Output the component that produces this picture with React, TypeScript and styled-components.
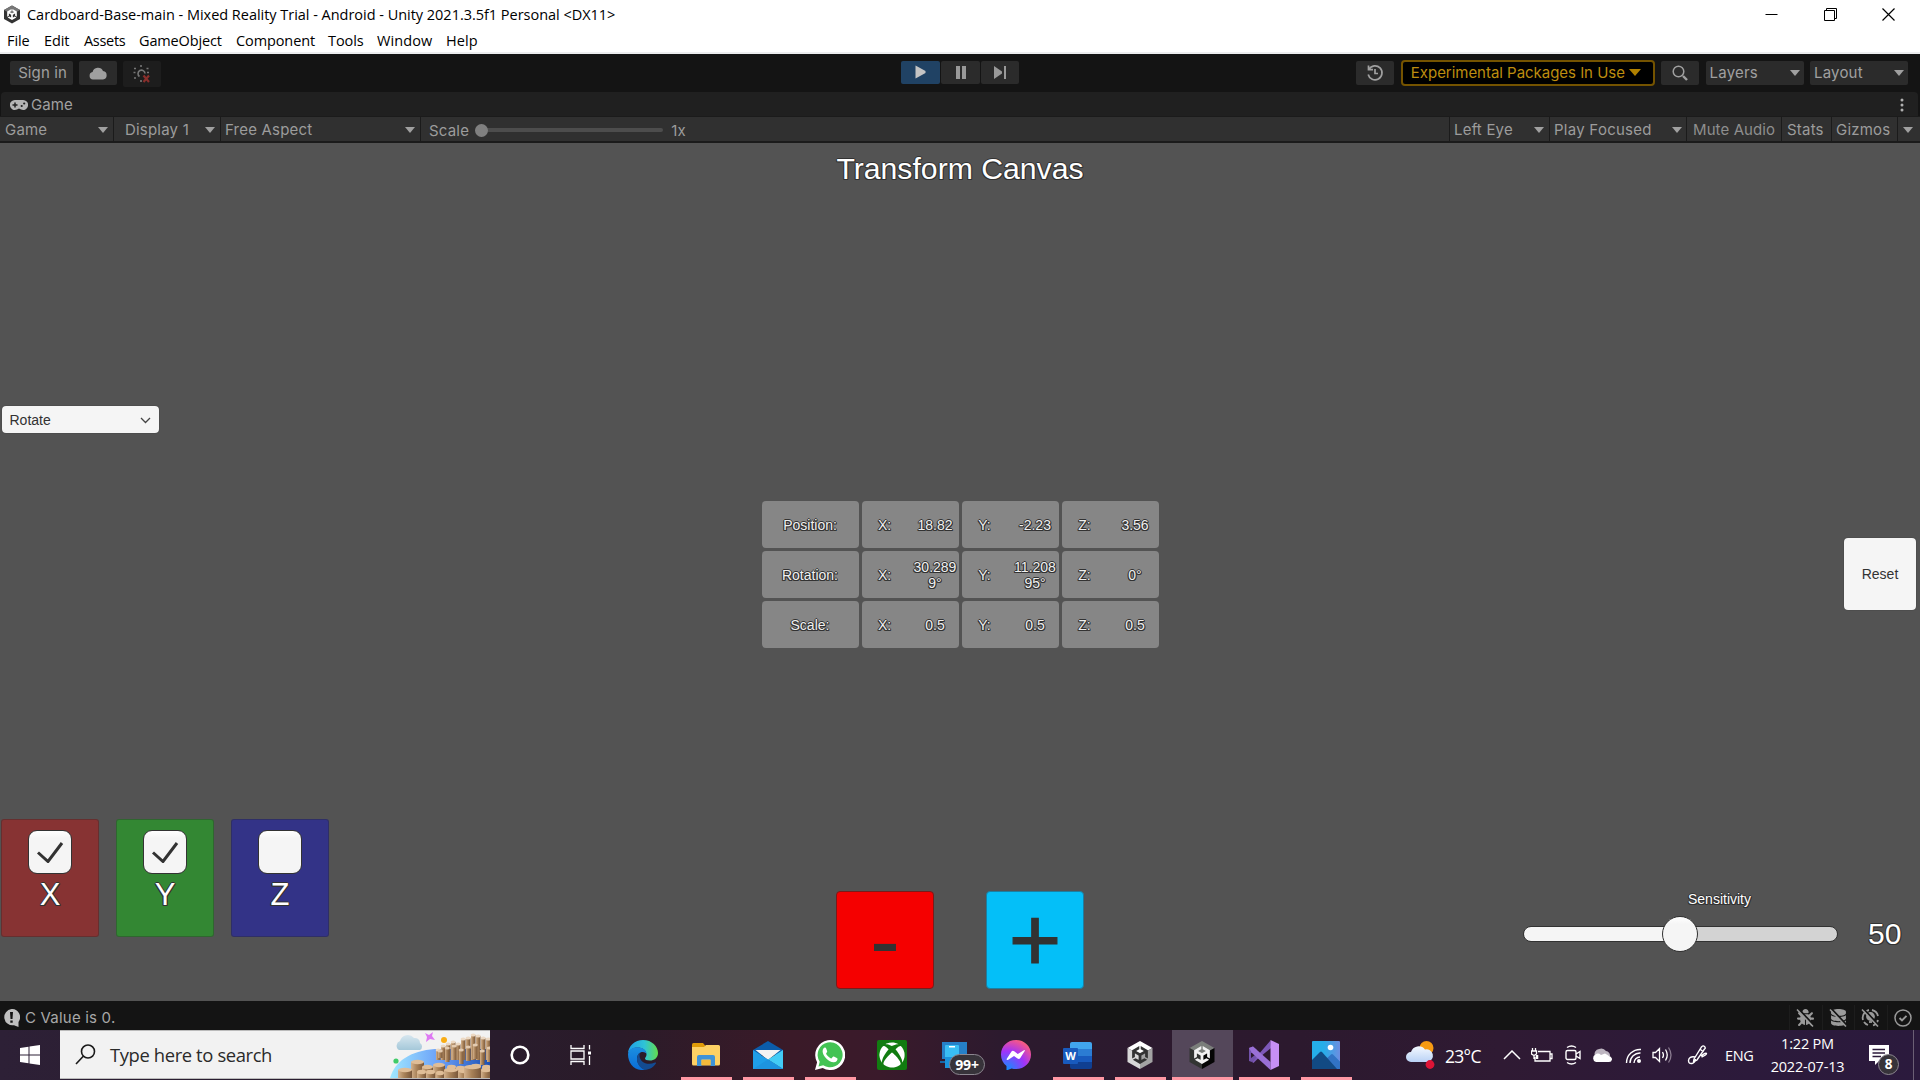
import React from 'react';
import styled, { createGlobalStyle, css } from 'styled-components';
import { FaUnity, FaXbox, FaBug, FaDatabase } from 'react-icons/fa6';

const Global = createGlobalStyle`
  * { box-sizing: border-box; }
  html, body { margin: 0; padding: 0; background: #141414; overflow: hidden; }
  svg { display: block; flex: none; }
`;

const editorFont = css`font-family: Inter, "Liberation Sans", sans-serif; font-size: 15px;`;
const systemFont = css`font-family: "Open Sans", "Noto Sans", sans-serif;`;
const outline = css`
  text-shadow: -1px 0 #323232, 1px 0 #323232, 0 1px #323232, 0 -1px #323232, 1px 1px #323232, -1px 1px #323232;
`;

const Desktop = styled.div`
  width: 1920px; height: 1080px; display: flex; flex-direction: column; overflow: hidden;
`;

/* ---------- window chrome ---------- */
const TitleBar = styled.header`
  height: 28px; background: #fff; display: flex; align-items: center; padding: 0 25px 0 3px; color: #000;
  ${systemFont} font-size: 14.5px;
`;
const WindowTitle = styled.span`margin-left: 6px; letter-spacing: -0.025px; white-space: nowrap; flex: 1;`;
const WindowControls = styled.div`display: flex; gap: 45.5px;`;
const MenuBar = styled.nav`
  height: 26px; background: #fff; border-bottom: 2px solid #ecedef; color: #000;
  display: flex; align-items: center; padding: 1px 0 0 7px; ${systemFont} font-size: 14.5px;
`;
const MenuItem = styled.span<{ $w: number; $ls?: number }>`
  width: ${p => p.$w}px; flex: none; white-space: nowrap; letter-spacing: ${p => p.$ls ?? -0.1}px;
`;

/* ---------- editor toolbars ---------- */
const Toolbar = styled.div`
  height: 38px; background: #141414; color: #a0a0a0; ${editorFont}
  display: grid; grid-template-columns: 1fr auto 1fr; padding: 7px 12px 0 10px;
`;
const ToolGroup = styled.div<{ $end?: boolean; $gap: number }>`
  display: flex; align-items: flex-start; gap: ${p => p.$gap}px; justify-content: ${p => (p.$end ? 'flex-end' : 'flex-start')};
`;
const PlayGroup = styled(ToolGroup)`margin-left: 2px;`;
const ToolButton = styled.div<{ $w: number; $bg?: string; $h?: number }>`
  width: ${p => p.$w}px; height: ${p => p.$h ?? 24}px; background: ${p => p.$bg ?? '#2b2b2b'};
  border-radius: 2px; display: flex; align-items: center; justify-content: center; white-space: nowrap; padding-bottom: 1px;
`;
const SignIn = styled(ToolButton)`padding-left: 2px; letter-spacing: 0.1px;`;
const ToolSelect = styled(ToolButton)`justify-content: space-between; padding: 0 4px 1px; letter-spacing: 0.2px;`;
const PackagesButton = styled.div`
  width: 254px; height: 26px; margin: -1px 0 0; border: 2px solid #745300; border-radius: 4px; background: #000;
  color: #bd8d0f; display: flex; align-items: center; gap: 4px; padding: 0 0 1px 8px; white-space: nowrap; letter-spacing: -0.03px;
`;
const Arrow = styled.i<{ $c?: string; $s?: number }>`
  width: 0; height: 0; flex: none;
  border-left: ${p => p.$s ?? 5}px solid transparent; border-right: ${p => p.$s ?? 5}px solid transparent;
  border-top: ${p => (p.$s ?? 5) + 1}px solid ${p => p.$c ?? '#a0a0a0'};
`;
const TabBar = styled.div`
  height: 24px; margin: 0 2px 0 1px; border-radius: 4px 4px 0 0; background: #202020; color: #a0a0a0; ${editorFont}
  display: flex; align-items: center; padding: 1px 11px 0 9px; gap: 3px; letter-spacing: 0.1px;
`;
const Grow = styled.div`flex: 1;`;
const GameBar = styled.div`
  height: 27px; background: #303030; border-top: 1px solid #1b1b1b; border-bottom: 2px solid #1b1b1b; color: #9c9c9c;
  display: flex; padding-left: 1px; ${editorFont}
`;
const BarCell = styled.div<{ $w: number; $pl: number; $pr?: number; $line?: boolean; $ls?: number; $dim?: boolean }>`
  width: ${p => p.$w}px; padding: 1px ${p => p.$pr ?? 0}px 0 ${p => p.$pl}px; display: flex; align-items: center;
  justify-content: space-between; white-space: nowrap; letter-spacing: ${p => p.$ls ?? 0.2}px;
  border-right: ${p => (p.$line === false ? 0 : 1)}px solid #1b1b1b; color: ${p => (p.$dim ? '#8e8e8e' : 'inherit')};
`;
const ScaleCell = styled(BarCell)`justify-content: flex-start; padding-top: 2px;`;
const ScaleLine = styled.div`
  width: 188px; height: 4px; border-radius: 2px; background: #4d4d4d; display: flex; align-items: center; margin: 0 8px 0 6px;
`;
const ScaleKnob = styled.div`width: 13px; height: 13px; border-radius: 50%; background: #808080;`;

/* ---------- game view ---------- */
const GameView = styled.main`
  height: 858px; background: #535353; font-family: "Liberation Sans", Arial, sans-serif; font-size: 14px; color: #fff;
`;
const CanvasTitle = styled.h1`
  margin: 0; padding-top: 8px; height: 263px; font-size: 30.2px; font-weight: 400; line-height: 36px; text-align: center; ${outline}
`;
const ModeSelect = styled.div`
  width: 157px; height: 27px; margin-left: 1.5px; border-radius: 4px; background: #f5f5f5; color: #323232;
  display: flex; align-items: center; justify-content: space-between; padding: 1px 8px 0 8px; box-shadow: 0 0 1px #222;
`;
const MiddleRow = styled.section`
  margin-top: 68px; height: 147px; display: grid; grid-template-columns: 1fr auto 1fr; align-items: center; padding-right: 4px;
`;
const ValueTable = styled.div`
  grid-column: 2; display: grid; grid-template-columns: repeat(4, 97px); grid-auto-rows: 47px; gap: 3px; margin-left: 4px;
`;
const Cell = styled.div`
  border-radius: 4px; background: #868686; display: flex; align-items: center; justify-content: center;
  line-height: 16px; color: #f0f0f0; ${outline}
`;
const AxisName = styled.span`width: 46px; text-align: center;`;
const AxisValue = styled.span`width: 48px; text-align: center; margin-left: 3px; padding-left: 1px; white-space: pre;`;
const ResetButton = styled.div`
  justify-self: end; width: 72px; height: 72px; margin-bottom: 1px; border-radius: 4px; background: #f5f5f5; color: #323232;
  display: flex; align-items: center; justify-content: center; box-shadow: 0 0 1px #222;
`;
const BottomRow = styled.section`
  margin-top: 171px; display: grid; grid-template-columns: 1fr auto 1fr; padding: 0 19px 0 1px;
`;
const AxisToggles = styled.div`display: flex; gap: 17px;`;
const AxisPanel = styled.div<{ $c: string }>`
  width: 98px; height: 118px; border-radius: 3px; background: ${p => p.$c}; border: 1px solid rgba(40, 40, 40, 0.35);
  display: flex; flex-direction: column; align-items: center; padding-top: 10px; font-size: 31px; line-height: 36px; gap: 3px; ${outline}
`;
const CheckBox = styled.div`
  width: 44px; height: 44px; border-radius: 9px; border: 1px solid #333; background: linear-gradient(#fff, #f5f5f5 7px);
  display: flex; align-items: center; justify-content: center;
`;
const StepButtons = styled.div`display: flex; gap: 52px; padding-top: 72px; margin-left: 18px;`;
const StepButton = styled.div<{ $c: string; $edge: string; $stroke?: number; $lh: number }>`
  width: 98px; height: 98px; border-radius: 4px; background: ${p => p.$c}; border: 1px solid ${p => p.$edge}; color: #323232;
  text-align: center; font-size: 90px; line-height: ${p => p.$lh}px; -webkit-text-stroke: ${p => p.$stroke ?? 0}px #323232;
`;
const Sensitivity = styled.div`
  justify-self: end; padding-top: 72px; display: grid; grid-template-columns: 315px 33px; column-gap: 30.5px; row-gap: 8px;
  align-items: center; align-content: start;
`;
const SensLabel = styled.span`text-align: center; line-height: 16px; padding-left: 79px; grid-column: 1; ${outline}`;
const SensTrack = styled.div`
  grid-column: 1; height: 16px; border-radius: 8px; border: 1px solid #323232;
  background: linear-gradient(90deg, #f5f5f5 50%, #d3d3d3 50%); display: flex; align-items: center; justify-content: center;
`;
const SensKnob = styled.div`
  width: 36px; height: 36px; flex: none; border-radius: 50%; border: 1px solid #323232; background: linear-gradient(#fff, #f5f5f5 7px);
`;
const SensValue = styled.span`grid-column: 2; font-size: 30px; line-height: 38px; ${outline}`;

/* ---------- status bar ---------- */
const StatusBar = styled.footer`
  height: 29px; background: #141414; color: #a8a8a8; display: flex; align-items: center; padding: 4px 1px 0 3px; gap: 5px; ${editorFont}
  letter-spacing: 0.2px;
`;
const StatusIcon = styled.div`
  width: 32.5px; height: 25px; border-left: 1px solid #1d1d1d; display: flex; align-items: center; justify-content: center;
  margin-left: -5px; color: #9a9a9a;
`;

/* ---------- taskbar ---------- */
const TaskBar = styled.div`
  height: 50px; display: flex; color: #fff; ${systemFont}
  background: linear-gradient(90deg, #2d2036 0, #291c2c 500px, #2a1b29 620px, #3a1a28 790px, #3a1a2b 880px, #2c1a2e 1000px, #2c192e 1300px, #2f1a33 1500px, #2c1a3b 1750px, #2b1a3d 1920px);
`;
const StartButton = styled.div`width: 60px; display: flex; align-items: center; justify-content: center;`;
const SearchBox = styled.div`
  width: 430px; height: 49px; background: #f2f2f2; border-top: 1px solid #bbb; border-bottom: 1px solid #bbb; color: #2a2a2a;
  display: flex; align-items: center; padding-left: 15px; font-size: 18.4px; white-space: nowrap;
`;
const SearchText = styled.span`margin-left: 14px; flex: 1; letter-spacing: -0.38px;`;
const Slot = styled.div<{ $w?: number }>`
  width: ${p => p.$w ?? 62}px; flex: none; display: flex; flex-direction: column; align-items: center; justify-content: flex-end;
`;
const SlotBody = styled.div<{ $active?: boolean }>`
  height: 47px; width: ${p => (p.$active ? 61 : 51)}px; padding-top: 3px; display: flex; align-items: center; justify-content: center;
  background: ${p => (p.$active ? '#54475a' : 'transparent')};
`;
const Underline = styled.div<{ $on?: boolean; $active?: boolean }>`
  height: 3px; width: ${p => (p.$active ? 61 : 51)}px; background: ${p => (p.$on ? '#ff98a4' : 'transparent')};
`;
const Badged = styled.div`position: relative;`;
const CountBadge = styled.span`
  position: absolute; left: 9px; top: 13px; width: 36px; height: 21px; border-radius: 11px; background: #37333a; border: 1px solid #8c8790;
  font: 700 14px/19px "Open Sans", sans-serif; text-align: center; letter-spacing: -0.2px;
`;
const Tray = styled.div`flex: 1; display: flex; align-items: center; padding-left: 49px;`;
const TrayItem = styled.div<{ $w: number }>`width: ${p => p.$w}px; flex: none; display: flex; align-items: center; white-space: nowrap;`;
const Temperature = styled(TrayItem)`font-size: 17.5px; letter-spacing: -0.7px; padding-top: 2px;`;
const Language = styled(TrayItem)`font-size: 14.5px; letter-spacing: -0.4px;`;
const Clock = styled(TrayItem)`
  flex-direction: column; font-size: 14.5px; line-height: 23px; letter-spacing: -0.2px;
`;
const Notifications = styled(Badged)`margin-left: 24px;`;
const NoticeBadge = styled.span`
  position: absolute; left: 9px; top: 9px; width: 21px; height: 21px; border-radius: 50%; background: #37333a; border: 1px solid #8c8790;
  font: 700 13.5px/18px "Open Sans", sans-serif; text-align: center;
`;
const ShowDesktop = styled.div`width: 1px; height: 50px; background: #6b5f75; margin-left: 22px;`;

/* ---------- drawings ---------- */
const UnityHex = ({ size, light = true }: { size: number; light?: boolean }) => (
  <svg width={size} height={size} viewBox="0 0 30 30">
    <path d="M15 1 27.5 8 15 15 2.500 8Z" fill={light ? '#fff' : '#7b7e7b'} />
    <path d="M2.500 8 15 15V29L2.500 22Z" fill={light ? '#d8d8d8' : '#333533'} />
    <path d="M27.500 8 15 15V29L27.500 22Z" fill={light ? '#a3a3a3' : '#050505'} />
    <g transform="translate(6 6)"><FaUnity size={18} color={light ? '#333' : '#f2f2f2'} /></g>
  </svg>
);
const HistoryIcon = () => (
  <svg width="18" height="18" viewBox="0 0 18 18" fill="none" stroke="#a0a0a0" strokeWidth="1.700">
    <path d="M3 5.200A7 7 0 1 1 2.200 10.500" /><path d="M2.500 1.500V5.700H7" /><path d="M9 5V9.500H12" />
  </svg>
);
const NoLightIcon = () => (
  <svg width="20" height="20" viewBox="0 0 20 20" fill="none" stroke="#777" strokeWidth="1.600">
    <path d="M7.500 12.500A3.500 3.500 0 1 1 13 9.500" />
    <path d="M9 1V3M2 4.500H4M14.500 4.500H16.500M1.500 8.500H3.500M2 14H4M9 16V18M15 8.500H17" />
    <path d="M11.500 11.500 17 18M17 11.500 11.500 18" stroke="#8a2f2c" strokeWidth="2.200" />
  </svg>
);
const GamepadIcon = () => (
  <svg width="18" height="12" viewBox="0 0 18 12">
    <path d="M5.500 1H12.500A5 5 0 1 1 11 10.500L9 9.500 7 10.500A5 5 0 1 1 5.500 1Z" fill="#b4b4b4" />
    <path d="M5 3.500V8.500M2.500 6H7.500" stroke="#202020" strokeWidth="1.500" />
    <circle cx="14.200" cy="4.500" r="1.100" fill="#202020" /><circle cx="11.700" cy="7" r="1.100" fill="#202020" />
  </svg>
);
const EdgeIcon = () => (
  <svg width="30" height="30" viewBox="0 0 30 30">
    <defs>
      <linearGradient id="eTop" x1="0" x2="1"><stop offset="0" stopColor="#1f9fe8" /><stop offset=".55" stopColor="#2fc3d6" /><stop offset="1" stopColor="#63dd4c" /></linearGradient>
      <linearGradient id="eLeft" x1="0" y1="0" x2="0" y2="1"><stop offset="0" stopColor="#1b8fe0" /><stop offset="1" stopColor="#0a6cd6" /></linearGradient>
    </defs>
    <path d="M0 14C0 6 7 0 15 0 24 0 30 6.500 30 13 30 18 26 20.500 22 20.500 18.500 20.500 17 19.500 17 18.500 17 17.500 18.500 17 18.500 14.500 18.500 10 14 7.500 9.500 7.500 5 7.500 1 10 0 14Z" fill="url(#eTop)" />
    <path d="M0 14C1 9 5 7.300 9.500 7.300 14 7.300 18.500 10 18.500 14 18.500 12 13 10.500 10.500 14 7 19 10 27 17 29.800 7 31.500 0 24 0 14Z" fill="url(#eLeft)" />
    <path d="M12 12.500C7 16 8 26.500 16.500 29.900 21.500 29.800 26 27 28 23.300 28.300 22.500 27.800 22.200 27 22.600 19 26 11.500 22 11.500 15.500 11.500 14.300 11.600 13.400 12 12.500Z" fill="#134b91" />
  </svg>
);
const FolderIcon = () => (
  <svg width="28" height="24" viewBox="0 0 28 24">
    <path d="M0 1.500Q0 0 1.500 0H11L13.500 3V8H0Z" fill="#e09b08" />
    <path d="M0 4H12L14 2H26.500Q28 2 28 3.500V21Q28 22.500 26.500 22.500H1.500Q0 22.500 0 21Z" fill="#fdd164" />
    <path d="M5 23V14Q5 12 7 12H21Q23 12 23 14V23H18.500V16.500H9.500V23Z" fill="#3e93d7" /><rect x="9.500" y="17" width="9" height="5" fill="#f4b93b" />
  </svg>
);
const MailIcon = () => (
  <svg width="30" height="28" viewBox="0 0 30 28">
    <path d="M0 9 15 0 30 9V14H0Z" fill="#0b5cab" /><path d="M2.500 9H27.500L15 19Z" fill="#f3f3f3" />
    <path d="M0 9 15 18.500 30 28H0Z" fill="#1f9ee8" /><path d="M30 9 15 18.500 30 28Z" fill="#43ccf6" /><path d="M0 28 15 18.500 30 28Z" fill="#1d94e0" />
  </svg>
);
const WhatsAppIcon = () => (
  <svg width="30" height="30" viewBox="0 0 30 30">
    <path d="M0 30 2.100 22.300A15 15 0 1 1 7.700 28Z" fill="#fff" />
    <path d="M3.500 26.500 4.700 21.700A12.500 12.500 0 1 1 8.200 25.200Z" fill="#43c354" />
    <g transform="translate(-1 -1)"><path d="M11 8.500C10 8.500 8.600 10 8.600 12.200 8.600 17 15 23.500 19.800 23.300 22 23.200 23.600 21.600 23.600 19.700 23.600 19.100 19.700 17.300 19.200 17.500 18.600 17.700 17.800 19.400 17.200 19.400 16 19.300 12.400 16 12.100 14.800 12 14.200 13.200 13.300 13.200 12.600 13.200 12 12 8.900 11.700 8.700Z" fill="#fff" /></g>
  </svg>
);
const XboxIcon = () => (
  <svg width="30" height="30" viewBox="0 0 30 30"><rect width="30" height="30" rx="2" fill="#117c10" /><g transform="translate(2 2)"><FaXbox size={26} color="#fff" /></g></svg>
);
const PhoneLinkIcon = () => (
  <svg width="28" height="28" viewBox="0 0 28 28">
    <rect x="2" y="1" width="25" height="17" fill="#2680c8" /><rect x="0" y="20" width="16" height="2" fill="#1769a8" />
    <rect x="5" y="4" width="14" height="23" rx="1" fill="#39bdf3" /><rect x="9" y="5" width="6" height="1.500" fill="#fff" /><rect x="5" y="16" width="14" height="11" fill="#1b93dc" />
  </svg>
);
const MessengerIcon = () => (
  <svg width="30" height="30" viewBox="0 0 30 30">
    <defs><radialGradient id="msg" cx=".2" cy="1" r="1.150"><stop offset="0" stopColor="#0a93ff" /><stop offset=".55" stopColor="#a033fa" /><stop offset=".85" stopColor="#e8509c" /><stop offset="1" stopColor="#ff6968" /></radialGradient></defs>
    <path d="M15 0C23.500 0 30 6.200 30 14.500S23.500 29 15 29C13.400 29 12 28.800 10.600 28.400L5.500 30.500V26C2 23.300 0 19.300 0 14.500 0 6.200 6.500 0 15 0Z" fill="url(#msg)" />
    <path d="M5.800 18.800 10.300 11.700Q11.500 10.200 13.200 11.300L16.800 14 22.500 10.500Q24.500 9.500 23.700 11L19.300 18Q18.200 19.500 16.500 18.500L13 15.900 7.300 19.700Q5.300 20.500 5.800 18.800Z" fill="#fff" />
  </svg>
);
const WordIcon = styled(Badged)`margin-right: 1px;`;
const WordLetter = styled.span`
  position: absolute; left: 0; top: 6px; width: 15px; height: 16px; background: #185abd; border-radius: 1px; font: 700 11px/16px "Open Sans", sans-serif; text-align: center;
`;
const WordSheet = styled.div`
  width: 22px; height: 27px; margin-left: 7px; border-radius: 2px;
  background: linear-gradient(#41a5ee 0 7px, #2b7cd3 7px 14px, #185abd 14px 20px, #103f91 20px);
`;
const VisualStudioIcon = () => (
  <svg width="30" height="30" viewBox="0 0 30 30">
    <path d="M0 8 4 6.500 8 10 8 13 2 13V18L6 15 8 17 3 22 0 21Z" fill="#7252aa" />
    <path d="M3 22 21.500 0.500 22 8 8.500 19 4.500 23Z" fill="#7d58b8" /><path d="M0 8 4 6.500 21.500 22V30L3 13Z" fill="#9a70d6" />
    <path d="M21.500 0 30 4V26L21.500 30Z" fill="#c78ff5" />
  </svg>
);
const PhotosIcon = () => (
  <svg width="28" height="28" viewBox="0 0 28 28">
    <defs><linearGradient id="sky" x1="0" x2="1"><stop offset=".4" stopColor="#25aee9" /><stop offset="1" stopColor="#6d8de0" /></linearGradient></defs>
    <rect width="28" height="28" rx="1" fill="url(#sky)" /><circle cx="18.500" cy="6.500" r="2.800" fill="#fff" />
    <path d="M12 20 19 13.500Q20 12.500 21 13.500L28 20.500V28H12Z" fill="#3273c4" /><path d="M0 19 8 11Q9 10 10 11L25 28H0Z" fill="#124a83" />
  </svg>
);

/* basalt columns of the search highlight: [x, top, width] */
const backColumns = [[46, 19], [51, 15], [56, 13], [61, 11], [66, 13], [71, 8], [76, 7], [81, 4], [86, 5], [91, 7], [96, 8]];
const midColumns = [[48, 20], [55, 17], [62, 15], [69, 19], [76, 16], [83, 14], [90, 20], [97, 17]];
const frontColumns = [
  [21, 31, 13], [32, 36, 11], [43, 34, 12], [57, 36, 9], [66, 37, 9], [81, 35, 10], [92, 36, 9],
  [8, 39, 14], [27, 41, 9], [36, 41, 9], [46, 42, 8], [54, 39, 14], [68, 40, 12], [74, 36, 17], [91, 39, 10],
];
const SearchArt = () => (
  <svg width="100" height="47" viewBox="0 0 100 47">
    <defs>
      <linearGradient id="sea" x1="0" x2="1"><stop offset="0" stopColor="#a0e8ff" /><stop offset=".5" stopColor="#6a9ff8" /><stop offset="1" stopColor="#1c4fb2" /></linearGradient>
      <linearGradient id="rock" x1="0" x2="1"><stop offset="0" stopColor="#d3b18c" /><stop offset=".45" stopColor="#a88158" /><stop offset="1" stopColor="#79573a" /></linearGradient>
      <linearGradient id="cl" x1="0" y1="0" x2="0" y2="1"><stop offset="0" stopColor="#d6e6ef" /><stop offset="1" stopColor="#a5c8d9" /></linearGradient>
    </defs>
    <path d="M0 47C5 30 20 20 45 18H100V47Z" fill="url(#sea)" />
    <path d="M9 19A5 5 0 0 1 10 10 8 8 0 0 1 24 7 5 5 0 0 1 30 12 4 4 0 0 1 30 19Z" fill="url(#cl)" />
    <path d="M35 2 39 4 43 1 42 5 45 9 40 8 36 11 37 6Z" fill="#de79f3" /><circle cx="54" cy="9" r="3" fill="#f9ad16" /><circle cx="6" cy="30" r="2.600" fill="#40cb69" />
    {backColumns.map(([x, y]) => (
      <g key={x}><rect x={x} y={y} width="4.500" height={29 - y} fill="url(#rock)" /><ellipse cx={x + 2.2} cy={y} rx="2.600" ry="1.500" fill="#ecd9c4" /></g>
    ))}
    {midColumns.map(([x, y]) => (
      <g key={x}><rect x={x} y={y} width="4.500" height={x < 55 ? 7 : 14} fill="url(#rock)" /><ellipse cx={x + 2.2} cy={y} rx="2.600" ry="1.500" fill="#e4cbb0" /></g>
    ))}
    {frontColumns.map(([x, y, w]) => (
      <g key={x}><rect x={x} y={y} width={w} height="16" fill="url(#rock)" /><ellipse cx={x + w / 2} cy={y} rx={w / 2} ry="2.200" fill="#dfbd97" /></g>
    ))}
  </svg>
);

const rows: [string, string, string, string][] = [
  ['Position:', '18.82', '-2.23', '3.56'],
  ['Rotation:', '30.289\n9°', '11.208\n95°', '0°'],
  ['Scale:', '0.5', '0.5', '0.5'],
];
const axes = ['X', 'Y', 'Z'];
const axisColors = ['#873333', '#338733', '#333387'];

const TaskApp = ({ on, active, w, children }: { on?: boolean; active?: boolean; w?: number; children: React.ReactNode }) => (
  <Slot $w={w}><SlotBody $active={active}>{children}</SlotBody><Underline $on={on} $active={active} /></Slot>
);

const Slash = () => (
  <>
    <path d="M2.500 1 18.500 18" stroke="#141414" strokeWidth="2" />
    <path d="M1 1.500 17 18.500" stroke="#9a9a9a" strokeWidth="1.600" />
  </>
);

export default function App() {
  return (
    <Desktop>
      <Global />
      <TitleBar>
        <svg width="18" height="19" viewBox="0 0 18 19">
          <path d="M9 .5 17 5V14L9 18.500 1 14V5Z" fill="#333" /><path d="M9 .5 17 5 9 9.500 1 5Z" fill="#777" />
          <g transform="translate(3.500 4)"><FaUnity size={11} color="#fff" /></g>
        </svg>
        <WindowTitle>Cardboard-Base-main - Mixed Reality Trial - Android - Unity 2021.3.5f1 Personal &lt;DX11&gt;</WindowTitle>
        <WindowControls>
          <svg width="13" height="13" viewBox="0 0 13 13"><path d="M.5 6.500H12.500" stroke="#000" /></svg>
          <svg width="13" height="13" viewBox="0 0 13 13" fill="none" stroke="#000"><path d="M.5 2.500H10.500V12.500H.5ZM2.500 2.500V.5H12.500V10.500H10.500" /></svg>
          <svg width="13" height="13" viewBox="0 0 13 13"><path d="M.5.5 12.500 12.500M12.500.5.5 12.500" stroke="#000" strokeWidth="1.200" /></svg>
        </WindowControls>
      </TitleBar>
      <MenuBar>
        <MenuItem $w={37}>File</MenuItem><MenuItem $w={40}>Edit</MenuItem><MenuItem $w={55} $ls={-0.3}>Assets</MenuItem>
        <MenuItem $w={97} $ls={-0.15}>GameObject</MenuItem><MenuItem $w={92}>Component</MenuItem><MenuItem $w={49}>Tools</MenuItem>
        <MenuItem $w={69} $ls={0.1}>Window</MenuItem><MenuItem $w={40} $ls={0.1}>Help</MenuItem>
      </MenuBar>

      <Toolbar>
        <ToolGroup $gap={6}>
          <SignIn $w={63}>Sign in</SignIn>
          <ToolButton $w={38}>
            <svg width="18" height="14" viewBox="0 0 18 14"><path d="M4 13.500A3.800 3.800 0 0 1 3.600 6 5.500 5.500 0 0 1 14 5 4.300 4.300 0 0 1 14 13.500Z" fill="#a0a0a0" /></svg>
          </ToolButton>
          <ToolButton $w={38} $h={26} $bg="#1d1d1d"><NoLightIcon /></ToolButton>
        </ToolGroup>
        <PlayGroup $gap={1}>
          <ToolButton $w={39} $h={23} $bg="#204264"><svg width="11" height="14" viewBox="0 0 11 14"><path d="M.5.5V13.500L10.500 8V6Z" fill="#c4c4c4" /></svg></ToolButton>
          <ToolButton $w={39} $h={23}><svg width="10" height="13"><path d="M0 0H4V13H0ZM6 0H10V13H6Z" fill="#999" /></svg></ToolButton>
          <ToolButton $w={38} $h={23}><svg width="12" height="13"><path d="M0 0V13L8 7.500V5.500ZM10 0H12V13H10Z" fill="#999" /></svg></ToolButton>
        </PlayGroup>
        <ToolGroup $gap={6.4} $end>
          <ToolButton $w={38}><HistoryIcon /></ToolButton>
          <PackagesButton>Experimental Packages In Use<Arrow $c="#b08000" $s={6} /></PackagesButton>
          <ToolButton $w={38}>
            <svg width="16" height="16" viewBox="0 0 16 16" fill="none" stroke="#a0a0a0"><circle cx="6.500" cy="6.500" r="5.300" strokeWidth="1.500" /><path d="M11 11 15 15" strokeWidth="2.400" /></svg>
          </ToolButton>
          <ToolSelect $w={98}>Layers<Arrow /></ToolSelect>
          <ToolSelect $w={98}>Layout<Arrow /></ToolSelect>
        </ToolGroup>
      </Toolbar>
      <TabBar>
        <GamepadIcon />Game<Grow />
        <svg width="12" height="14" viewBox="0 0 12 14" fill="#b0b0b0"><circle cx="7" cy="2" r="1.500" /><circle cx="7" cy="7" r="1.500" /><circle cx="7" cy="12" r="1.500" /></svg>
      </TabBar>
      <GameBar>
        <BarCell $w={113} $pl={4} $pr={5}>Game<Arrow /></BarCell>
        <BarCell $w={107} $pl={11} $pr={5}>Display 1<Arrow /></BarCell>
        <BarCell $w={200} $pl={4} $pr={5}>Free Aspect<Arrow /></BarCell>
        <ScaleCell $w={270} $pl={8} $line={false}>Scale<ScaleLine><ScaleKnob /></ScaleLine>1x</ScaleCell>
        <Grow />
        <BarCell $w={1} $pl={0} />
        <BarCell $w={100} $pl={4} $pr={5}>Left Eye<Arrow /></BarCell>
        <BarCell $w={137} $pl={4} $pr={4} $ls={0.26}>Play Focused<Arrow /></BarCell>
        <BarCell $w={95} $pl={6} $ls={0.1} $dim>Mute Audio</BarCell>
        <BarCell $w={50} $pl={5}>Stats</BarCell>
        <BarCell $w={66} $pl={4}>Gizmos</BarCell>
        <BarCell $w={22} $pl={5} $line={false}><Arrow /></BarCell>
      </GameBar>

      <GameView>
        <CanvasTitle>Transform Canvas</CanvasTitle>
        <ModeSelect>Rotate<svg width="11" height="7" viewBox="0 0 11 7"><path d="M1 1 5.500 5.500 10 1" fill="none" stroke="#444" strokeWidth="1.300" /></svg></ModeSelect>
        <MiddleRow>
          <ValueTable>
            {rows.map(([name, ...values]) => (
              <React.Fragment key={name}>
                <Cell>{name}</Cell>
                {values.map((v, i) => <Cell key={i}><AxisName>{axes[i]}:</AxisName><AxisValue>{v}</AxisValue></Cell>)}
              </React.Fragment>
            ))}
          </ValueTable>
          <ResetButton>Reset</ResetButton>
        </MiddleRow>
        <BottomRow>
          <AxisToggles>
            {axes.map((a, i) => (
              <AxisPanel key={a} $c={axisColors[i]}>
                <CheckBox>{i < 2 && <svg width="28" height="22" viewBox="0 0 28 22"><path d="M2 11.500 12 20.500 26 2" fill="none" stroke="#323232" strokeWidth="3" /></svg>}</CheckBox>
                {a}
              </AxisPanel>
            ))}
          </AxisToggles>
          <StepButtons>
            <StepButton $c="#f50000" $edge="#7a1a1a" $lh={99}>-</StepButton>
            <StepButton $c="#04bff8" $edge="#1d7ea0" $lh={96} $stroke={1.2}>+</StepButton>
          </StepButtons>
          <Sensitivity>
            <SensLabel>Sensitivity</SensLabel>
            <SensTrack><SensKnob /></SensTrack>
            <SensValue>50</SensValue>
          </Sensitivity>
        </BottomRow>
      </GameView>

      <StatusBar>
        <svg width="17" height="18" viewBox="0 0 17 18"><path d="M8.500 0A8.200 8.200 0 1 0 11 16.200L15.500 18V13A8.200 8.200 0 0 0 8.500 0Z" fill="#c0c0c0" /><path d="M7 3H10L9.500 10H7.500ZM7.300 11.500H9.700V13.800H7.300Z" fill="#141414" /></svg>
        C Value is 0.<Grow />
        <StatusIcon><svg width="19" height="19"><g transform="translate(1 1)"><FaBug size={17} /></g><Slash /></svg></StatusIcon>
        <StatusIcon><svg width="19" height="19"><g transform="translate(1 1)"><FaDatabase size={17} /></g><Slash /></svg></StatusIcon>
        <StatusIcon><svg width="19" height="19" fill="none" stroke="#9a9a9a" strokeWidth="1.800"><path d="M2 12A8 8 0 0 1 8 2M11 2A8 8 0 0 1 17 8M17 12A8 8 0 0 1 12 17.500M7 17A8 8 0 0 1 3 14" /><circle cx="9.500" cy="8.500" r="3.500" fill="#9a9a9a" /><path d="M8 14H11" /><Slash /></svg></StatusIcon>
        <StatusIcon><svg width="18" height="18" fill="none" stroke="#9a9a9a" strokeWidth="1.500"><circle cx="9" cy="9" r="8" /><path d="M5.500 9 8 11.500 12.500 6.800" strokeWidth="1.900" /></svg></StatusIcon>
      </StatusBar>

      <TaskBar>
        <StartButton><svg width="20" height="20" viewBox="0 0 20 20" fill="#fff"><path d="M0 3 8.500 1.800V9.500H0ZM9.500 1.600 20 0V9.500H9.500ZM0 10.500H8.500V18.200L0 17ZM9.500 10.500H20V20L9.500 18.400Z" /></svg></StartButton>
        <SearchBox>
          <svg width="21" height="21" viewBox="0 0 21 21" fill="none" stroke="#1a1a1a" strokeWidth="1.600"><circle cx="13" cy="7.500" r="6.500" /><path d="M8.500 12 1 20" /></svg>
          <SearchText>Type here to search</SearchText>
          <SearchArt />
        </SearchBox>
        <TaskApp w={60}><svg width="20" height="20"><circle cx="10" cy="10" r="8.300" fill="none" stroke="#fff" strokeWidth="2.600" /></svg></TaskApp>
        <TaskApp w={61}><svg width="22" height="20" viewBox="0 0 22 20" fill="none" stroke="#fff" strokeWidth="1.300"><path d="M1 0V3.500H14V0M1 20V16.500H14V20M1 6H14V14H1ZM19.500 0V4.500M19.500 11V20" /><rect x="18" y="6.500" width="3" height="3" fill="#fff" stroke="none" /></svg></TaskApp>
        <TaskApp w={64}><EdgeIcon /></TaskApp>
        <TaskApp on><FolderIcon /></TaskApp>
        <TaskApp on><MailIcon /></TaskApp>
        <TaskApp on><WhatsAppIcon /></TaskApp>
        <TaskApp><XboxIcon /></TaskApp>
        <TaskApp><Badged><PhoneLinkIcon /><CountBadge>99+</CountBadge></Badged></TaskApp>
        <TaskApp><MessengerIcon /></TaskApp>
        <TaskApp on><WordIcon><WordSheet /><WordLetter>W</WordLetter></WordIcon></TaskApp>
        <TaskApp on><UnityHex size={30} /></TaskApp>
        <TaskApp on active><UnityHex size={30} light={false} /></TaskApp>
        <TaskApp on><VisualStudioIcon /></TaskApp>
        <TaskApp on><PhotosIcon /></TaskApp>
        <Tray>
          <TrayItem $w={39}>
            <svg width="30" height="30" viewBox="0 0 30 30">
              <defs><linearGradient id="wc" x1="0" y1="0" x2="0" y2="1"><stop offset="0" stopColor="#f4f9ff" /><stop offset="1" stopColor="#b9d2f5" /></linearGradient></defs>
              <circle cx="20.500" cy="8" r="7" fill="#f79a12" /><path d="M5 22A5 5 0 0 1 5 12 8 8 0 0 1 19 9.500 6.300 6.300 0 0 1 22 22Z" fill="url(#wc)" /><circle cx="24" cy="24.500" r="4.400" fill="#dd1436" />
            </svg>
          </TrayItem>
          <Temperature $w={58}>23°C</Temperature>
          <TrayItem $w={28}><svg width="18" height="10"><path d="M1 9 9 1 17 9" fill="none" stroke="#fff" strokeWidth="1.500" /></svg></TrayItem>
          <TrayItem $w={34}><svg width="22" height="16" fill="none" stroke="#fff" strokeWidth="1.300"><path d="M7 4.500H19V14H4V10M19.500 7H21V11.500H19.500M1.500 1V4M4.500 1V4M.5 4H5.500V7L3 8.500.5 7ZM3 8.500V12" /><path d="M6 8V12" strokeWidth="2.500" /></svg></TrayItem>
          <TrayItem $w={27}><svg width="18" height="20" fill="none" stroke="#fff" strokeWidth="1.400"><rect x="1" y="5.500" width="10" height="9" rx="1.500" /><path d="M11 9 15 6.500V13.500L11 11M2 2.500Q6.500-.5 11 2.500M2 17.500Q6.500 20.500 11 17.500" /></svg></TrayItem>
          <TrayItem $w={33}><svg width="20" height="14" viewBox="0 0 20 14"><path d="M3 8A5 5 0 0 1 7 1 6 6 0 0 1 14 3 4.500 4.500 0 0 1 18 8Z" fill="#bdb5c0" /><path d="M4 14A4 4 0 0 1 3.500 6.500Q6 4.500 9 7L13 5.500Q16 7 17 8 20 9 20 11.500 19.500 14 17 14Z" fill="#fff" /></svg></TrayItem>
          <TrayItem $w={27}><svg width="18" height="18" fill="none" stroke="#fff" strokeWidth="1.400"><path d="M9 17A6 6 0 0 1 15 11M5 17A10 10 0 0 1 15.500 7M1.500 17A13.500 13.500 0 0 1 16 3.500" /><circle cx="14" cy="15" r="2" fill="#fff" stroke="none" /></svg></TrayItem>
          <TrayItem $w={35}><svg width="21" height="18" fill="none" stroke="#fff" strokeWidth="1.300"><path d="M1 6.500H3.500L7.500 2.500V15.500L3.500 11.500H1ZM10.500 6Q12.500 9 10.500 12M13.500 3.500Q17 9 13.500 14.500" /><path d="M16.500 1.500Q21.500 9 16.500 16.500" stroke="#8a7b90" /></svg></TrayItem>
          <TrayItem $w={38}><svg width="21" height="22" fill="none" stroke="#fff" strokeWidth="1.400"><path d="M7 15 14.500 3Q16 1 17.500 2.500T17.500 5L10 16 6.500 18ZM13.500 5.500 16.500 8M8 13Q2 12 1.500 16.500 1.500 20 5 19.500 8 19 8.500 15M14 12Q19 8 19.500 9.500 19.500 11 14.500 13" /></svg></TrayItem>
          <Language $w={45}>ENG</Language>
          <Clock $w={75}><span>1:22 PM</span><span>2022-07-13</span></Clock>
          <TrayItem $w={46}>
            <Notifications>
              <svg width="20" height="20" viewBox="0 0 20 20"><path d="M0 0H20V16H10L6 20V16H0Z" fill="#fff" /><path d="M3.500 4.500H16M3.500 8H16M3.500 11.500H12" stroke="#2c1a3b" strokeWidth="1.400" /></svg>
              <NoticeBadge>8</NoticeBadge>
            </Notifications>
          </TrayItem>
          <ShowDesktop />
        </Tray>
      </TaskBar>
    </Desktop>
  );
}
